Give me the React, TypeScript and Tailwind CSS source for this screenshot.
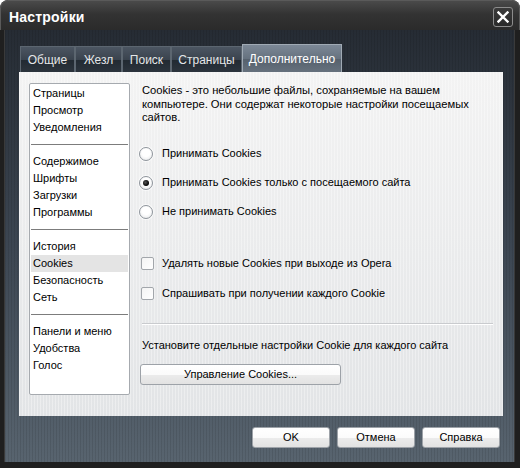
import React from 'react';

const font = "font-['Liberation_Sans',Arial,sans-serif]";

const tabs = [
  { label: 'Общие', w: 'w-[55px]' },
  { label: 'Жезл', w: 'w-[47px]' },
  { label: 'Поиск', w: 'w-[49px]' },
  { label: 'Страницы', w: 'w-[71px]' },
];

const groups = [
  ['Страницы', 'Просмотр', 'Уведомления'],
  ['Содержимое', 'Шрифты', 'Загрузки', 'Программы'],
  ['История', 'Cookies', 'Безопасность', 'Сеть'],
  ['Панели и меню', 'Удобства', 'Голос'],
];

function Radio({ checked, label }: { checked?: boolean; label: string }) {
  return (
    <div className="flex items-center h-[20px]">
      <span className="ml-[-3px] w-[14px] h-[14px] rounded-full border border-[#8f959c] bg-[radial-gradient(circle_at_50%_40%,#ffffff_40%,#e2e4e6_100%)] flex items-center justify-center shadow-[0_0_0_1px_rgba(255,255,255,0.6)]">
        {checked && <span className="w-[6px] h-[6px] rounded-full bg-[radial-gradient(circle_at_40%_40%,#555_0%,#000_70%)]" />}
      </span>
      <span className="ml-[9px]">{label}</span>
    </div>
  );
}

function Check({ label }: { label: string }) {
  return (
    <div className="flex items-center h-[20px]">
      <span className="ml-[-1px] w-[13px] h-[13px] rounded-[2px] border border-[#a2a6ab] bg-[linear-gradient(135deg,#f4f4f4,#ffffff)]" />
      <span className="ml-[8px]">{label}</span>
    </div>
  );
}

function Btn({ children, className }: { children: React.ReactNode; className?: string }) {
  return (
    <div
      className={`h-[21px] flex items-center justify-center rounded-[3px] border border-[#9da2a8] bg-[linear-gradient(#ffffff_0%,#fbfbfb_50%,#ececec_51%,#e2e2e2_100%)] text-black font-normal text-[11px] ${className ?? ''}`}
    >
      {children}
    </div>
  );
}

export default function App() {
  return (
    <div className={`${font} w-[520px] h-[468px] bg-[#1f1f1f] rounded-t-[8px] flex flex-col overflow-hidden`}>
      {/* title bar */}
      <div className="h-[30px] shrink-0 flex items-center justify-between pl-[8px] pr-[6px] bg-[linear-gradient(#4a4a4a,#333333_45%,#2b2b2b)] rounded-t-[8px] border border-b-0 border-[#5a5a5a]">
        <span className="text-white font-bold text-[14px] tracking-[0.2px] mt-[3px]">Настройки</span>
        <div className="w-[20px] h-[20px] rounded-[3px] border border-[#8c8c8c] bg-[linear-gradient(#3a3a3a,#2a2a2a)] flex items-center justify-center mt-[2px]">
          <svg width="12" height="12" viewBox="0 0 12 12">
            <path d="M1.5 1.5 L10.5 10.5 M10.5 1.5 L1.5 10.5" stroke="#fff" strokeWidth="2.4" strokeLinecap="square" />
          </svg>
        </div>
      </div>

      {/* body */}
      <div className="flex-1 ml-[4px] mr-[5px] mb-[6px] flex flex-col px-[14px] pt-[14px] bg-[image:repeating-linear-gradient(90deg,rgba(0,0,0,0.09)_0px,rgba(0,0,0,0.09)_1px,transparent_1px,transparent_3px),linear-gradient(#262c34,#3c4652_50%,#58646f)] border-l border-r border-[#3a3a3a]">
        {/* tabs */}
        <div className="h-[28px] flex items-end ml-[1px]">
          {tabs.map((t) => (
            <div
              key={t.label}
              className={`${t.w} h-[26px] flex items-center justify-center text-[12px] text-[#e4e6e8] border border-b-0 border-[#5c6670] bg-[linear-gradient(#4c5662,#3a434e_50%,#222a32_52%,#2c343d)]`}
            >
              {t.label}
            </div>
          ))}
          <div className="w-[100px] h-[28px] flex items-center justify-center text-[12px] text-white border border-b-0 border-[#a0aab4] bg-[linear-gradient(#7c8896,#66727f_50%,#56616d_52%,#66717d)]">
            Дополнительно
          </div>
        </div>

        {/* panel */}
        <div className="w-[484px] h-[344px] flex pl-[10px] pr-[10px] pt-[11px] text-[11px] text-black bg-[image:repeating-linear-gradient(90deg,rgba(255,255,255,0.35)_0px,rgba(255,255,255,0.35)_1px,transparent_1px,transparent_3px),linear-gradient(#f3f3f3,#e2e4e6)]">
          {/* list */}
          <div className="w-[101px] h-[312px] shrink-0 bg-white border border-[#a6aaaf] rounded-[2px] pt-[1px] px-[1px]">
            {groups.map((g, gi) => (
              <div key={gi}>
                {gi > 0 && <div className="mt-[8px] mb-[8px] h-[1px] bg-[#7c7c7c]" />}
                {g.map((it) => (
                  <div
                    key={it}
                    className={`h-[17px] leading-[17px] px-[2px] ${it === 'Cookies' ? 'bg-[#e4e4e4]' : ''}`}
                  >
                    {it}
                  </div>
                ))}
              </div>
            ))}
          </div>

          {/* right column */}
          <div className="flex-1 ml-[12px] flex flex-col pt-[1px]">
            <p className="leading-[13.5px] text-[11.2px]">
              Cookies - это небольшие файлы, сохраняемые на вашем компьютере. Они содержат некоторые настройки посещаемых сайтов.
            </p>
            <div className="mt-[19px] flex flex-col gap-[9px]">
              <Radio label="Принимать Cookies" />
              <Radio checked label="Принимать Cookies только с посещаемого сайта" />
              <Radio label="Не принимать Cookies" />
            </div>
            <div className="mt-[32px] flex flex-col gap-[10px]">
              <Check label="Удалять новые Cookies при выходе из Opera" />
              <Check label="Спрашивать при получении каждого Cookie" />
            </div>
            <div className="mt-[19px] h-[2px] border-t border-[#c9cbce] border-b border-b-white" />
            <div className="mt-[13px] h-[14px] leading-[14px]">Установите отдельные настройки Cookie для каждого сайта</div>
            <Btn className="mt-[12px] ml-[-2px] w-[201px]">Управление Cookies...</Btn>
          </div>
        </div>

        {/* footer buttons */}
        <div className="flex justify-end gap-[7px] mt-[11px]">
          <Btn className="w-[78px]">OK</Btn>
          <Btn className="w-[78px]">Отмена</Btn>
          <Btn className="w-[78px]">Справка</Btn>
        </div>
      </div>
    </div>
  );
}
